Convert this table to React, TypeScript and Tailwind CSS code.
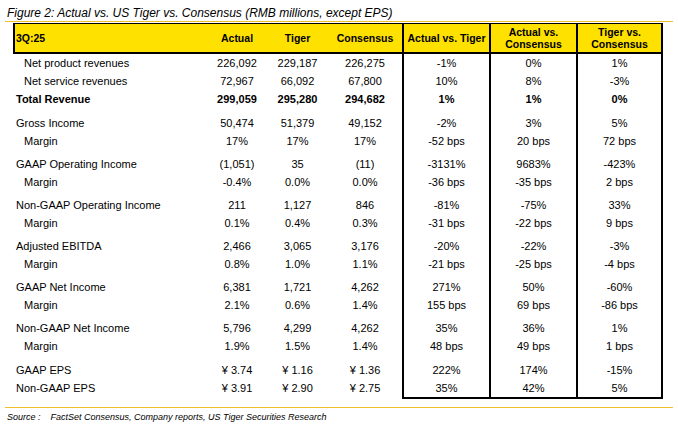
type Row = {
  label: string;
  sub?: boolean;
  bold?: boolean;
  gap?: number;
  vals: string[];
};

const rows: Row[] = [
  { label: "Net product revenues", sub: true, vals: ["226,092", "229,187", "226,275", "-1%", "0%", "1%"] },
  { label: "Net service revenues", sub: true, vals: ["72,967", "66,092", "67,800", "10%", "8%", "-3%"] },
  { label: "Total Revenue", bold: true, vals: ["299,059", "295,280", "294,682", "1%", "1%", "0%"] },
  { label: "Gross Income", gap: 6, vals: ["50,474", "51,379", "49,152", "-2%", "3%", "5%"] },
  { label: "Margin", sub: true, vals: ["17%", "17%", "17%", "-52 bps", "20 bps", "72 bps"] },
  { label: "GAAP Operating Income", gap: 5, vals: ["(1,051)", "35", "(11)", "-3131%", "9683%", "-423%"] },
  { label: "Margin", sub: true, vals: ["-0.4%", "0.0%", "0.0%", "-36 bps", "-35 bps", "2 bps"] },
  { label: "Non-GAAP Operating Income", gap: 5, vals: ["211", "1,127", "846", "-81%", "-75%", "33%"] },
  { label: "Margin", sub: true, vals: ["0.1%", "0.4%", "0.3%", "-31 bps", "-22 bps", "9 bps"] },
  { label: "Adjusted EBITDA", gap: 5, vals: ["2,466", "3,065", "3,176", "-20%", "-22%", "-3%"] },
  { label: "Margin", sub: true, vals: ["0.8%", "1.0%", "1.1%", "-21 bps", "-25 bps", "-4 bps"] },
  { label: "GAAP Net Income", gap: 5, vals: ["6,381", "1,721", "4,262", "271%", "50%", "-60%"] },
  { label: "Margin", sub: true, vals: ["2.1%", "0.6%", "1.4%", "155 bps", "69 bps", "-86 bps"] },
  { label: "Non-GAAP Net Income", gap: 5, vals: ["5,796", "4,299", "4,262", "35%", "36%", "1%"] },
  { label: "Margin", sub: true, vals: ["1.9%", "1.5%", "1.4%", "48 bps", "49 bps", "1 bps"] },
  { label: "GAAP EPS", gap: 6, vals: ["¥ 3.74", "¥ 1.16", "¥ 1.36", "222%", "174%", "-15%"] },
  { label: "Non-GAAP EPS", vals: ["¥ 3.91", "¥ 2.90", "¥ 2.75", "35%", "42%", "5%"] },
];

const font = { fontFamily: '"Liberation Sans", Arial, sans-serif' };

export default function App() {
  return (
    <div className="w-[678px] h-[427px] bg-white text-black px-[5px] pt-[5px]" style={font}>
      {/* Title */}
      <div className="pl-[2px] h-[16px] leading-[16px] text-[12px] italic">
        Figure 2: Actual vs. US Tiger vs. Consensus (RMB millions, except EPS)
      </div>
      <div className="h-[1px] bg-[#efc02c]" />

      <div className="ml-[8px] mt-[1px] w-[650px]">
        {/* Header */}
        <div className="grid grid-cols-[192px_60px_61px_74px_87px_87px_87px] h-[31px] bg-[#ffe100] border-l-2 border-t border-b-2 border-black text-[10.5px] font-bold leading-[12px]">
          <div className="flex items-center pl-[1px]">3Q:25</div>
          <div className="flex items-center justify-center">Actual</div>
          <div className="flex items-center justify-center">Tiger</div>
          <div className="flex items-center justify-center">Consensus</div>
          <div className="flex items-center justify-center border-l-2 border-black">Actual vs. Tiger</div>
          <div className="flex items-center justify-center text-center border-l-2 border-black">
            Actual vs.
            <br />
            Consensus
          </div>
          <div className="flex items-center justify-center text-center border-x-2 border-black">
            Tiger vs.
            <br />
            Consensus
          </div>
        </div>

        {/* Body */}
        {rows.map((r, i) => {
          const last = i === rows.length - 1;
          const pad = r.gap === 6 ? "pt-[6px]" : r.gap === 5 ? "pt-[5px]" : "";
          return (
            <div
              key={i}
              className={`grid grid-cols-[194px_60px_61px_74px_87px_87px_87px] text-[11px] leading-[18px] ${r.bold ? "font-bold" : ""}`}
            >
              <div className={`${pad} ${r.sub ? "pl-[11px]" : "pl-[3px]"} whitespace-nowrap`}>{r.label}</div>
              <div className={`${pad} text-center`}>{r.vals[0]}</div>
              <div className={`${pad} text-center`}>{r.vals[1]}</div>
              <div className={`${pad} text-center`}>{r.vals[2]}</div>
              <div className={`${pad} text-center border-l-2 border-black ${last ? "border-b-2" : ""}`}>{r.vals[3]}</div>
              <div className={`${pad} text-center border-l-2 border-black ${last ? "border-b-2" : ""}`}>{r.vals[4]}</div>
              <div className={`${pad} text-center border-x-2 border-black ${last ? "border-b-2" : ""}`}>{r.vals[5]}</div>
            </div>
          );
        })}
      </div>

      {/* Footer */}
      <div className="mt-[8px] h-[1px] bg-[#efc02c]" />
      <div className="pl-[2px] pt-[2px] text-[9px] italic leading-[14px] whitespace-nowrap">
        Source :&nbsp;&nbsp;&nbsp; FactSet Consensus, Company reports, US Tiger Securities Research
      </div>
    </div>
  );
}
